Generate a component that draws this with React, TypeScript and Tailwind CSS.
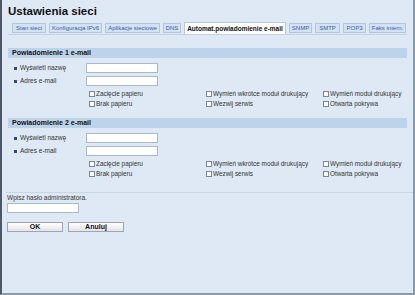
import React from "react";

const tabs = [
  { t: "Stan sieci", w: 34 },
  { t: "Konfiguracja IPv6", w: 53 },
  { t: "Aplikacje sieciowe", w: 55 },
  { t: "DNS", w: 18 },
  { t: "Automat.powiadomienie e-mail", w: 102, active: true },
  { t: "SNMP", w: 23 },
  { t: "SMTP", w: 25 },
  { t: "POP3", w: 23 },
  { t: "Faks intern.", w: 37 },
];

const Check = ({ label }: { label: string }) => (
  <div className="flex items-center gap-[1px] h-[8px] leading-[8px]">
    <span className="inline-block w-[6px] h-[6px] border border-[#7a8696] bg-white" />
    <span>{label}</span>
  </div>
);

const Section = ({ title }: { title: string }) => (
  <div>
    <div className="h-[10px] bg-[#bcd3ec] pl-[4px] flex items-center font-bold text-[7px] text-[#111]">
      {title}
    </div>
    <div className="flex flex-col gap-[3px] mt-[5px] text-[6.5px] text-[#333]">
      {["Wyświetl nazwę", "Adres e-mail"].map((l) => (
        <div key={l} className="flex items-center h-[10px]">
          <div className="w-[78px] flex items-center pl-[6px]">
            <span className="inline-block w-[3px] h-[3px] bg-[#2a4a90] mr-[3px]" />
            {l}
          </div>
          <div className="w-[72px] h-[10px] bg-white border border-[#aab8c8]" />
        </div>
      ))}
    </div>
    <div className="grid grid-cols-[117px_117px_auto] pl-[81px] mt-[4px] gap-y-[2px] text-[6.4px] text-[#333]">
      <Check label="Zacięcie papieru" />
      <Check label="Wymień wkrótce moduł drukujący" />
      <Check label="Wymień moduł drukujący" />
      <Check label="Brak papieru" />
      <Check label="Wezwij serwis" />
      <Check label="Otwarta pokrywa" />
    </div>
  </div>
);

export default function App() {
  return (
    <div
      className="w-[415px] h-[295px] bg-[#dee9f5] border-l-[2px] border-l-[#4e5868] border-r-[2px] border-r-[#8c99a8] border-b-[2px] border-b-[#8c99a8] overflow-hidden"
      style={{ fontFamily: '"Liberation Sans", Arial, sans-serif' }}
    >
      <div className="pl-[6px] pt-[4px] text-[11.5px] font-bold text-[#111] leading-[14px]">Ustawienia sieci</div>
      <div className="mx-[6px] mt-[4px] flex items-end gap-[3px] pl-[4px] border-b border-[#c2d2e4] h-[13px]">
        {tabs.map((tab) =>
          tab.active ? (
            <div
              key={tab.t}
              style={{ width: tab.w }}
              className="h-[12px] bg-white border border-[#b9c9dc] border-b-0 flex items-center justify-center text-[6.5px] font-bold text-[#111] whitespace-nowrap"
            >
              {tab.t}
            </div>
          ) : (
            <div
              key={tab.t}
              style={{ width: tab.w }}
              className="h-[10px] mb-[1px] bg-[#d3e2f3] border border-[#b4c6db] flex items-center justify-center text-[6px] text-[#3c5aa8] whitespace-nowrap"
            >
              {tab.t}
            </div>
          )
        )}
      </div>
      <div className="mx-[6px] mt-[13px] flex flex-col gap-[10px]">
        <Section title="Powiadomienie 1 e-mail" />
        <Section title="Powiadomienie 2 e-mail" />
      </div>
      <div className="ml-[4px] mt-[14px] border-t border-[#c7d5e5]" />
      <div className="pl-[5px] mt-[1px] text-[6.5px] leading-[8px] text-[#333]">Wpisz hasło administratora.</div>
      <div className="ml-[5px] mt-[1px] w-[72px] h-[10px] bg-white border border-[#aab8c8]" />
      <div className="ml-[5px] mt-[9px] flex gap-[5px]">
        <div className="w-[56px] h-[10px] bg-gradient-to-b from-white to-[#e4e4e4] border border-[#9aa6b4] flex items-center justify-center text-[7px] font-bold text-[#111]">OK</div>
        <div className="w-[56px] h-[10px] bg-gradient-to-b from-white to-[#e4e4e4] border border-[#9aa6b4] flex items-center justify-center text-[7px] font-bold text-[#111]">Anuluj</div>
      </div>
    </div>
  );
}
